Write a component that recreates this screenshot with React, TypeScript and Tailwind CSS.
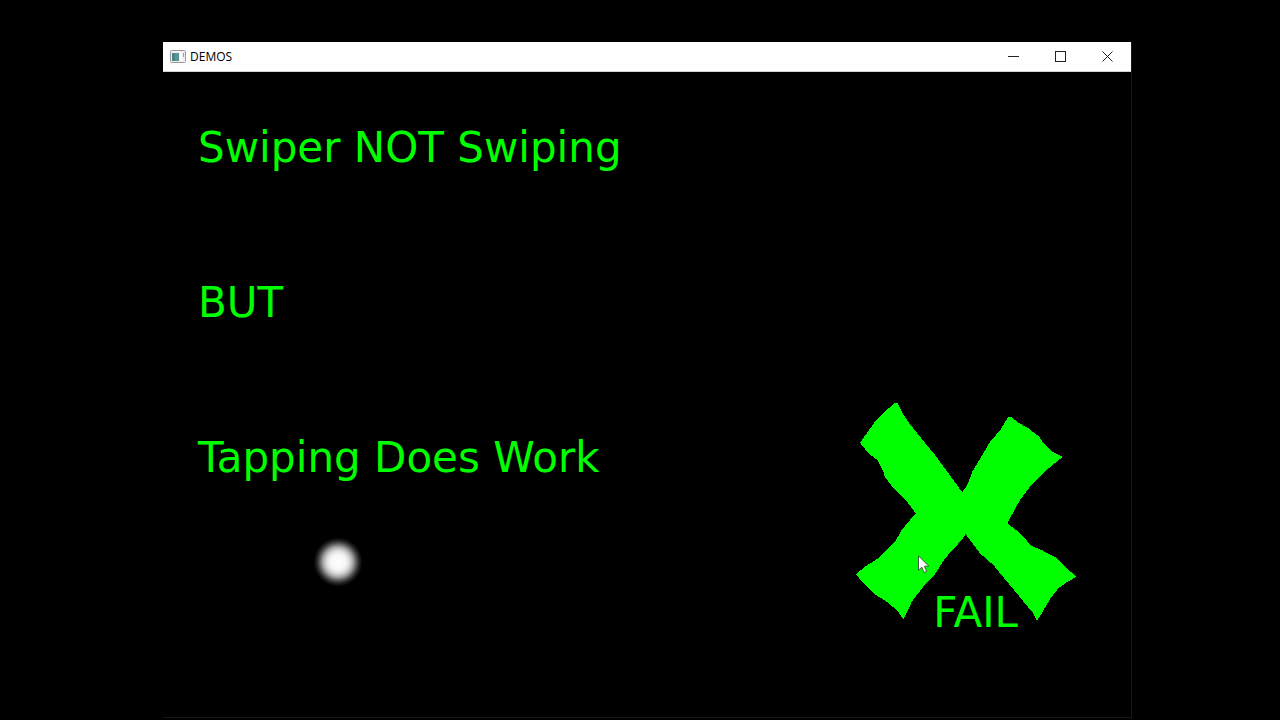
import type { ReactNode } from "react";

function AppIcon() {
  return (
    <svg width="16" height="14" viewBox="0 0 16 14" aria-hidden="true">
      <rect x="0.5" y="0.5" width="15" height="12" rx="1" fill="#f1f1f3" stroke="#999999" />
      <rect x="2" y="3" width="7" height="8" fill="#5c9693" />
      <rect x="2" y="3" width="3" height="8" fill="#478482" />
      <rect x="10" y="3" width="2" height="8" fill="#ffffff" />
      <rect x="13" y="3" width="1" height="4" fill="#b98f94" />
    </svg>
  );
}

function CaptionButton({ label, children }: { label: string; children: ReactNode }) {
  return (
    <button type="button" aria-label={label} className="flex h-7 w-[47px] items-center justify-center">
      <svg width="11" height="11" viewBox="0 0 11 11" fill="none" stroke="#222222" aria-hidden="true">
        {children}
      </svg>
    </button>
  );
}

function CrossMark() {
  return (
    <svg width="224" height="222" viewBox="0 0 224 222" fill="#00ff00" shapeRendering="crispEdges" aria-hidden="true">
      <path d="M40 2.7L43 3.3L46 10.7L53 21.7L70 43L80 55L91.7 71L105 89.3L107.5 91.7L112.3 85L117.7 71L126.7 56L135.7 40.7L145 30.7L153.3 16.7L156.7 17.3L163.3 22.7L173.3 28.3L184.3 36.7L188.3 43.3L196 51L207.7 56.7L191.7 70L175 86.7L165 100L154.3 119.3L152.3 123.3L163.3 131.7L176.7 146L186.7 150L201 157.7L211.7 168.3L221.7 176.7L211.7 182.3L203.3 188.3L195 199L185.7 215L181.7 220.7L178.3 213.3L161.7 193.3L138.3 165L125 153.3L110.5 134L107.3 139.3L90 158.3L80 174.3L68.3 186.7L56.7 201.7L53.3 210L48.3 219L41.7 210L31.7 201.7L18.3 193.3L8.3 183.3L1 174.3L10 166.7L23.3 158.3L40 141.7L46.7 130L60.7 113.3L53.3 103.3L40 90L30 77.3L28.3 71.7L22.3 60L13.3 53.3L5 42.7L20 21.7L31.7 10Z" />
    </svg>
  );
}

function Pointer() {
  return (
    <svg width="12" height="19" viewBox="0 0 12 19" aria-hidden="true">
      <path d="M0.5 0.8V15.2L3.8 12.2L6 17.5L8.6 16.4L6.4 11.2H10.8Z" fill="#ffffff" stroke="#333333" strokeWidth="0.8" />
    </svg>
  );
}

export default function App() {
  return (
    <div className="min-h-screen bg-black pt-[42px] pr-[148px] pb-0.5 pl-[163px]">
      <div className="border-r border-b border-[#131c13]">
        <header className="flex h-[30px] justify-between border-b border-[#d4d4d4] bg-white">
          <div className="flex items-center gap-1 pl-[7px]">
            <AppIcon />
            <h1 className="pt-px font-['Open_Sans','Noto_Sans',sans-serif] text-xs text-black">DEMOS</h1>
          </div>
          <div className="flex">
            <CaptionButton label="Minimize">
              <path d="M0 5.5H11" />
            </CaptionButton>
            <CaptionButton label="Maximize">
              <rect x="0.5" y="0.5" width="10" height="10" />
            </CaptionButton>
            <CaptionButton label="Close">
              <path d="M0.5 0.5L10.5 10.5M10.5 0.5L0.5 10.5" />
            </CaptionButton>
          </div>
        </header>
        <main className="relative flex flex-col gap-[107px] px-[35px] pt-[52px] pb-20 font-['Verdana','DejaVu_Sans',sans-serif] text-[42px] leading-[48px] text-[#00ff00]">
          <p>Swiper NOT Swiping</p>
          <p>BUT</p>
          <p>Tapping Does Work</p>
          <p className="pr-[78px] text-right">FAIL</p>
          <div className="absolute top-[328px] right-[52px]">
            <CrossMark />
          </div>
          <div className="absolute top-[465px] left-[150px] size-[50px] rounded-full bg-[radial-gradient(closest-side,#ffffff_0%,#f6f6f6_30%,#dcdcdc_45%,#a4a4a4_60%,#5c5c5c_73%,#242424_85%,#000000_98%)]" />
          <div className="absolute top-[483px] right-[201px]">
            <Pointer />
          </div>
        </main>
      </div>
    </div>
  );
}
